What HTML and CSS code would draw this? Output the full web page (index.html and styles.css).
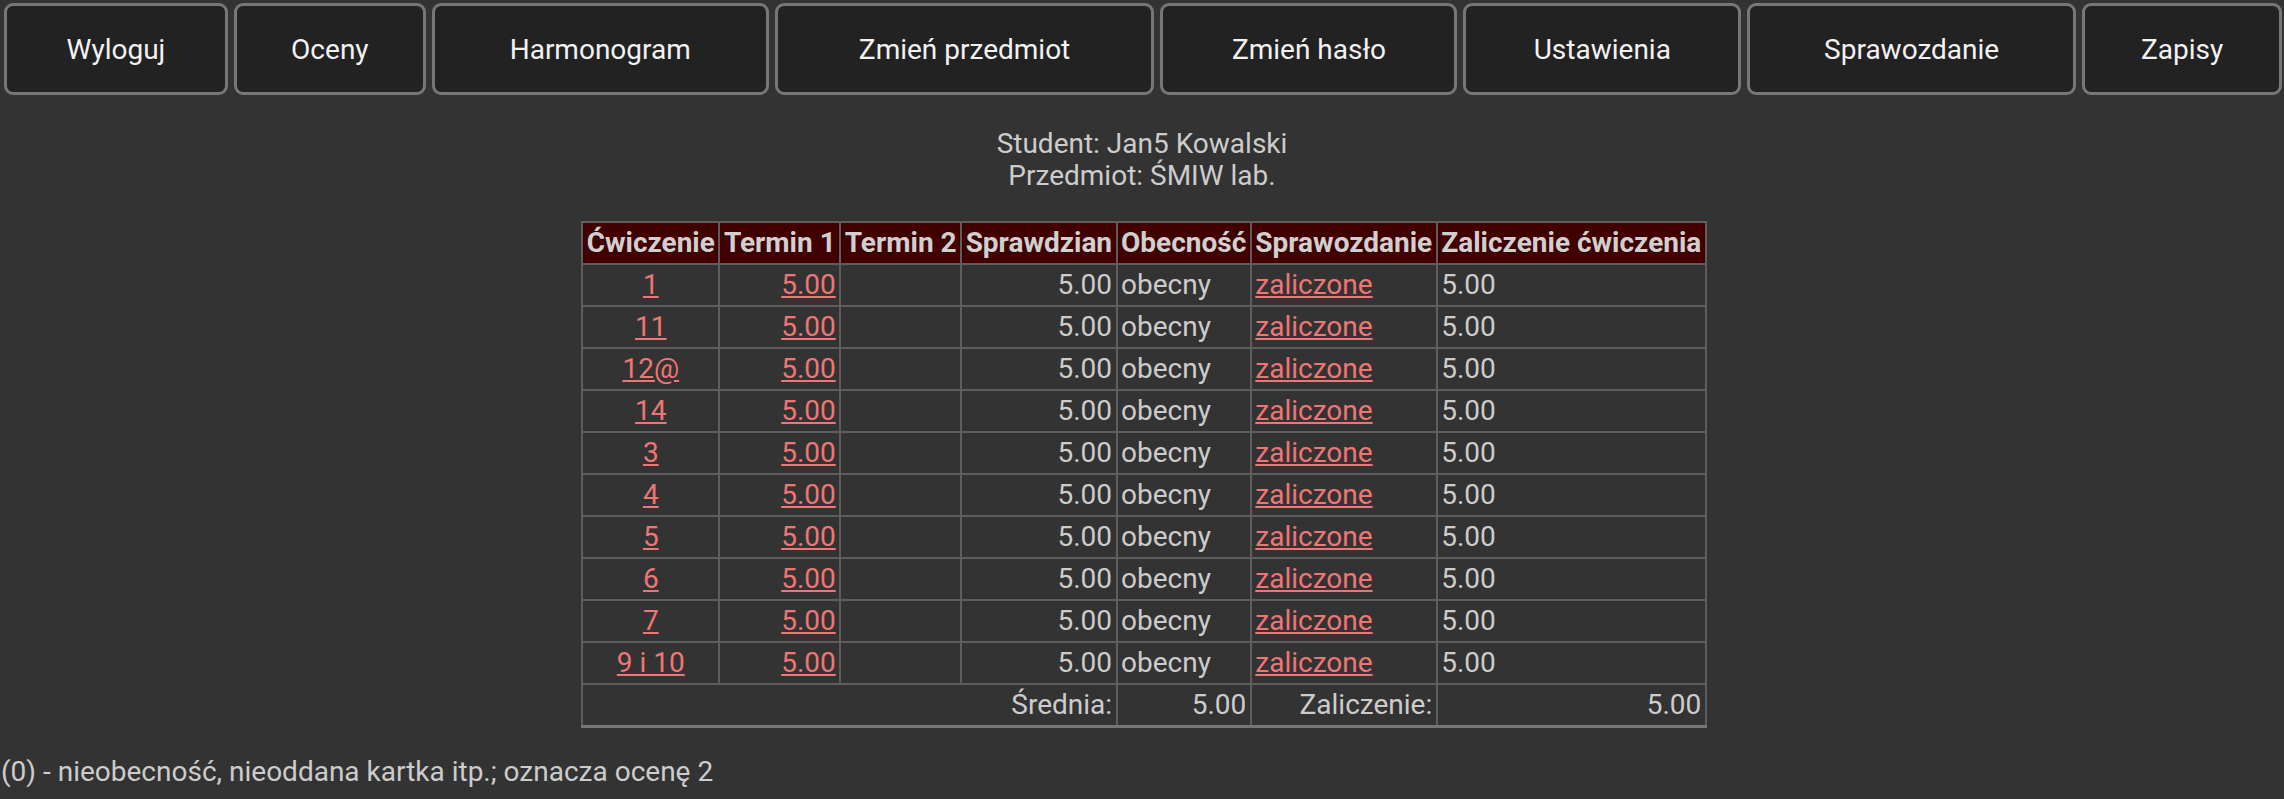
FILE: index.html
```html
<!DOCTYPE html>
<html lang="pl">
<head>
<meta charset="utf-8">
<title>Oceny</title>
<link rel="stylesheet" href="styles.css">
</head>
<body>
<nav class="menu">
  <button class="btn">Wyloguj</button>
  <button class="btn">Oceny</button>
  <button class="btn">Harmonogram</button>
  <button class="btn">Zmień przedmiot</button>
  <button class="btn">Zmień hasło</button>
  <button class="btn">Ustawienia</button>
  <button class="btn">Sprawozdanie</button>
  <button class="btn">Zapisy</button>
</nav>
<div class="info">
  <div>Student: Jan5 Kowalski</div>
  <div>Przedmiot: ŚMIW lab.</div>
</div>
<div class="table-wrap">
<table class="grades">
  <thead>
    <tr><th>Ćwiczenie</th><th>Termin 1</th><th>Termin 2</th><th>Sprawdzian</th><th>Obecność</th><th>Sprawozdanie</th><th>Zaliczenie ćwiczenia</th></tr>
  </thead>
  <tbody>
    <tr><td class="c"><a href="#">1</a></td><td class="r"><a href="#">5.00</a></td><td></td><td class="r">5.00</td><td>obecny</td><td><a href="#">zaliczone</a></td><td>5.00</td></tr>
    <tr><td class="c"><a href="#">11</a></td><td class="r"><a href="#">5.00</a></td><td></td><td class="r">5.00</td><td>obecny</td><td><a href="#">zaliczone</a></td><td>5.00</td></tr>
    <tr><td class="c"><a href="#">12@</a></td><td class="r"><a href="#">5.00</a></td><td></td><td class="r">5.00</td><td>obecny</td><td><a href="#">zaliczone</a></td><td>5.00</td></tr>
    <tr><td class="c"><a href="#">14</a></td><td class="r"><a href="#">5.00</a></td><td></td><td class="r">5.00</td><td>obecny</td><td><a href="#">zaliczone</a></td><td>5.00</td></tr>
    <tr><td class="c"><a href="#">3</a></td><td class="r"><a href="#">5.00</a></td><td></td><td class="r">5.00</td><td>obecny</td><td><a href="#">zaliczone</a></td><td>5.00</td></tr>
    <tr><td class="c"><a href="#">4</a></td><td class="r"><a href="#">5.00</a></td><td></td><td class="r">5.00</td><td>obecny</td><td><a href="#">zaliczone</a></td><td>5.00</td></tr>
    <tr><td class="c"><a href="#">5</a></td><td class="r"><a href="#">5.00</a></td><td></td><td class="r">5.00</td><td>obecny</td><td><a href="#">zaliczone</a></td><td>5.00</td></tr>
    <tr><td class="c"><a href="#">6</a></td><td class="r"><a href="#">5.00</a></td><td></td><td class="r">5.00</td><td>obecny</td><td><a href="#">zaliczone</a></td><td>5.00</td></tr>
    <tr><td class="c"><a href="#">7</a></td><td class="r"><a href="#">5.00</a></td><td></td><td class="r">5.00</td><td>obecny</td><td><a href="#">zaliczone</a></td><td>5.00</td></tr>
    <tr><td class="c"><a href="#">9 i 10</a></td><td class="r"><a href="#">5.00</a></td><td></td><td class="r">5.00</td><td>obecny</td><td><a href="#">zaliczone</a></td><td>5.00</td></tr>
  </tbody>
  <tfoot>
    <tr><td class="r" colspan="4">Średnia:</td><td class="r">5.00</td><td class="r">Zaliczenie:</td><td class="r">5.00</td></tr>
  </tfoot>
</table>
</div>
<p class="note">(0) - nieobecność, nieoddana kartka itp.; oznacza ocenę 2</p>
</body>
</html>
```
FILE: styles.css
```css
html, body {
  margin: 0;
  padding: 0;
  background: #333333;
}
body {
  font-family: Roboto, "Noto Sans", sans-serif;
  font-size: 28px;
  color: #cccccc;
}
.menu {
  display: grid;
  grid-template-columns: 224fr 192fr 337fr 380fr 297fr 278fr 329fr 200fr;
  column-gap: 6px;
  padding: 3px 2px 0 4px;
}
.btn {
  height: 92px;
  background: #222222;
  color: #f2f2f2;
  border: 3px solid #777777;
  border-radius: 9px;
  font-family: Roboto, "Noto Sans", sans-serif;
  font-size: 28px;
  padding: 0;
}
.info {
  text-align: center;
  margin-top: 33px;
  line-height: 32px;
}
.table-wrap {
  padding-left: 4px;
  margin-top: 29px;
}
.grades {
  margin: 0 auto;
  border-collapse: collapse;
  border: 2px solid #666666;
  line-height: 32px;
}
.grades th,
.grades td {
  border: 2px solid #5e5e5e;
  padding: 4px 3.5px;
  white-space: nowrap;
  text-align: left;
}
.grades th {
  background: #400000;
  font-weight: bold;
  color: #d0d0d0;
}
.grades td.c { text-align: center; }
.grades td.r { text-align: right; }
.grades tfoot td { border-bottom: 3px solid #777777; }
.grades a {
  color: #f07575;
  text-decoration: underline;
}
.note {
  margin: 28px 0 0 1px;
  line-height: 32px;
}
```
